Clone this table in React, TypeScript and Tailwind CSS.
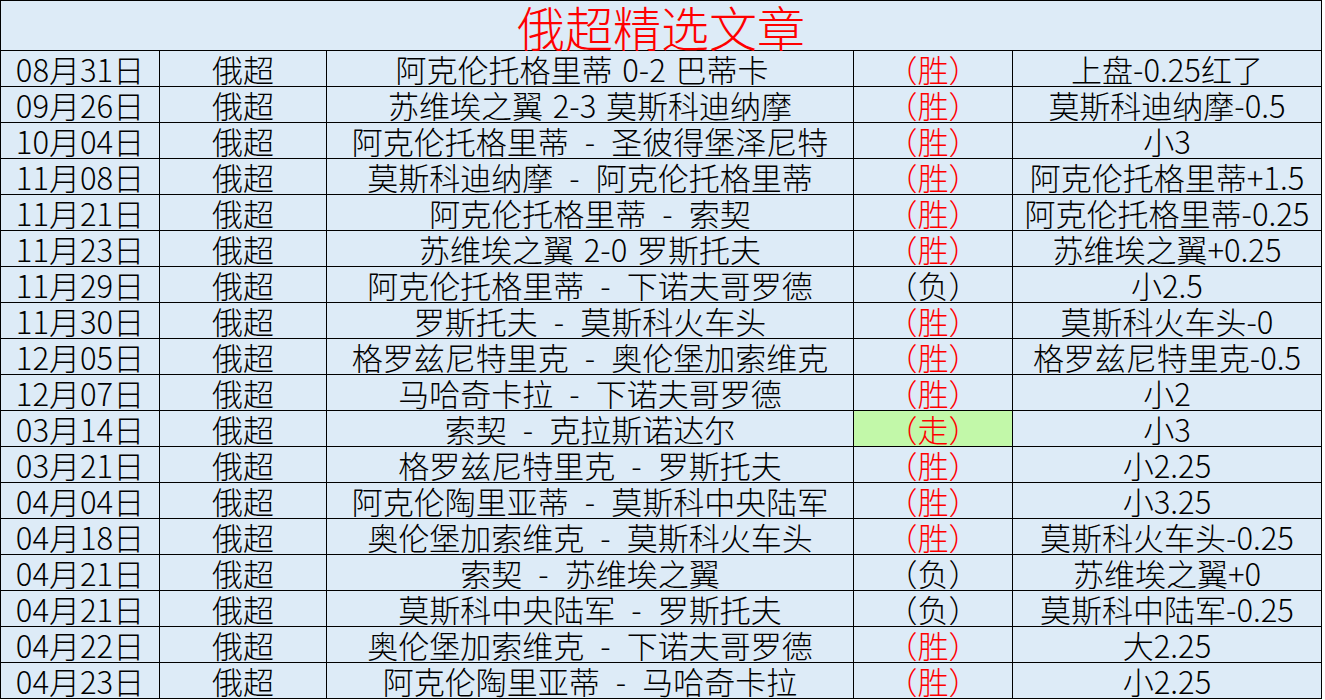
import React from "react";

type Row = {
  date: string;
  match: string;
  result: "胜" | "负" | "走";
  tip: string;
};

const rows: Row[] = [
  { date: "08月31日", match: "阿克伦托格里蒂 0-2 巴蒂卡", result: "胜", tip: "上盘-0.25红了" },
  { date: "09月26日", match: "苏维埃之翼 2-3 莫斯科迪纳摩", result: "胜", tip: "莫斯科迪纳摩-0.5" },
  { date: "10月04日", match: "阿克伦托格里蒂 - 圣彼得堡泽尼特", result: "胜", tip: "小3" },
  { date: "11月08日", match: "莫斯科迪纳摩 - 阿克伦托格里蒂", result: "胜", tip: "阿克伦托格里蒂+1.5" },
  { date: "11月21日", match: "阿克伦托格里蒂 - 索契", result: "胜", tip: "阿克伦托格里蒂-0.25" },
  { date: "11月23日", match: "苏维埃之翼 2-0 罗斯托夫", result: "胜", tip: "苏维埃之翼+0.25" },
  { date: "11月29日", match: "阿克伦托格里蒂 - 下诺夫哥罗德", result: "负", tip: "小2.5" },
  { date: "11月30日", match: "罗斯托夫 - 莫斯科火车头", result: "胜", tip: "莫斯科火车头-0" },
  { date: "12月05日", match: "格罗兹尼特里克 - 奥伦堡加索维克", result: "胜", tip: "格罗兹尼特里克-0.5" },
  { date: "12月07日", match: "马哈奇卡拉 - 下诺夫哥罗德", result: "胜", tip: "小2" },
  { date: "03月14日", match: "索契 - 克拉斯诺达尔", result: "走", tip: "小3" },
  { date: "03月21日", match: "格罗兹尼特里克 - 罗斯托夫", result: "胜", tip: "小2.25" },
  { date: "04月04日", match: "阿克伦陶里亚蒂 - 莫斯科中央陆军", result: "胜", tip: "小3.25" },
  { date: "04月18日", match: "奥伦堡加索维克 - 莫斯科火车头", result: "胜", tip: "莫斯科火车头-0.25" },
  { date: "04月21日", match: "索契 - 苏维埃之翼", result: "负", tip: "苏维埃之翼+0" },
  { date: "04月21日", match: "莫斯科中央陆军 - 罗斯托夫", result: "负", tip: "莫斯科中陆军-0.25" },
  { date: "04月22日", match: "奥伦堡加索维克 - 下诺夫哥罗德", result: "胜", tip: "大2.25" },
  { date: "04月23日", match: "阿克伦陶里亚蒂 - 马哈奇卡拉", result: "胜", tip: "小2.25" },
];

const cell = "flex h-[35px] items-center justify-center whitespace-nowrap bg-[#ddebf7] leading-none";

// matches written as "A - B" get a wider gap around the dash, like the sheet
function MatchText({ text }: { text: string }) {
  const parts = text.split(" - ");
  if (parts.length !== 2) {
    return <span className="[word-spacing:3px]">{text}</span>;
  }
  return (
    <>
      <span>{parts[0]}</span>
      <span className="mx-[16px]">-</span>
      <span>{parts[1]}</span>
    </>
  );
}

export default function App() {
  return (
    <div
      className="w-[1322px] bg-black p-px text-[31px] font-light text-black"
      style={{ fontFamily: '"Noto Sans CJK SC", "Liberation Sans", sans-serif' }}
    >
      <div className="flex h-[49px] items-center justify-center bg-[#ddebf7] text-[48px] leading-none text-[#ff0000]">
        俄超精选文章
      </div>
      <div className="mt-px grid grid-cols-[158px_166px_526px_158px_308px] gap-px">
        {rows.map((row, i) => (
          <React.Fragment key={i}>
            <div className={cell}>{row.date}</div>
            <div className={cell}>俄超</div>
            <div className={cell + (i === 0 ? " pr-4" : "")}>
              <MatchText text={row.match} />
            </div>
            <div
              className={
                cell +
                (row.result === "走" ? " !bg-[#c2f8a9]" : "") +
                (row.result === "负" ? " text-black" : " text-[#ff0000]")
              }
            >
              （{row.result}）
            </div>
            <div className={cell}>{row.tip}</div>
          </React.Fragment>
        ))}
      </div>
    </div>
  );
}
